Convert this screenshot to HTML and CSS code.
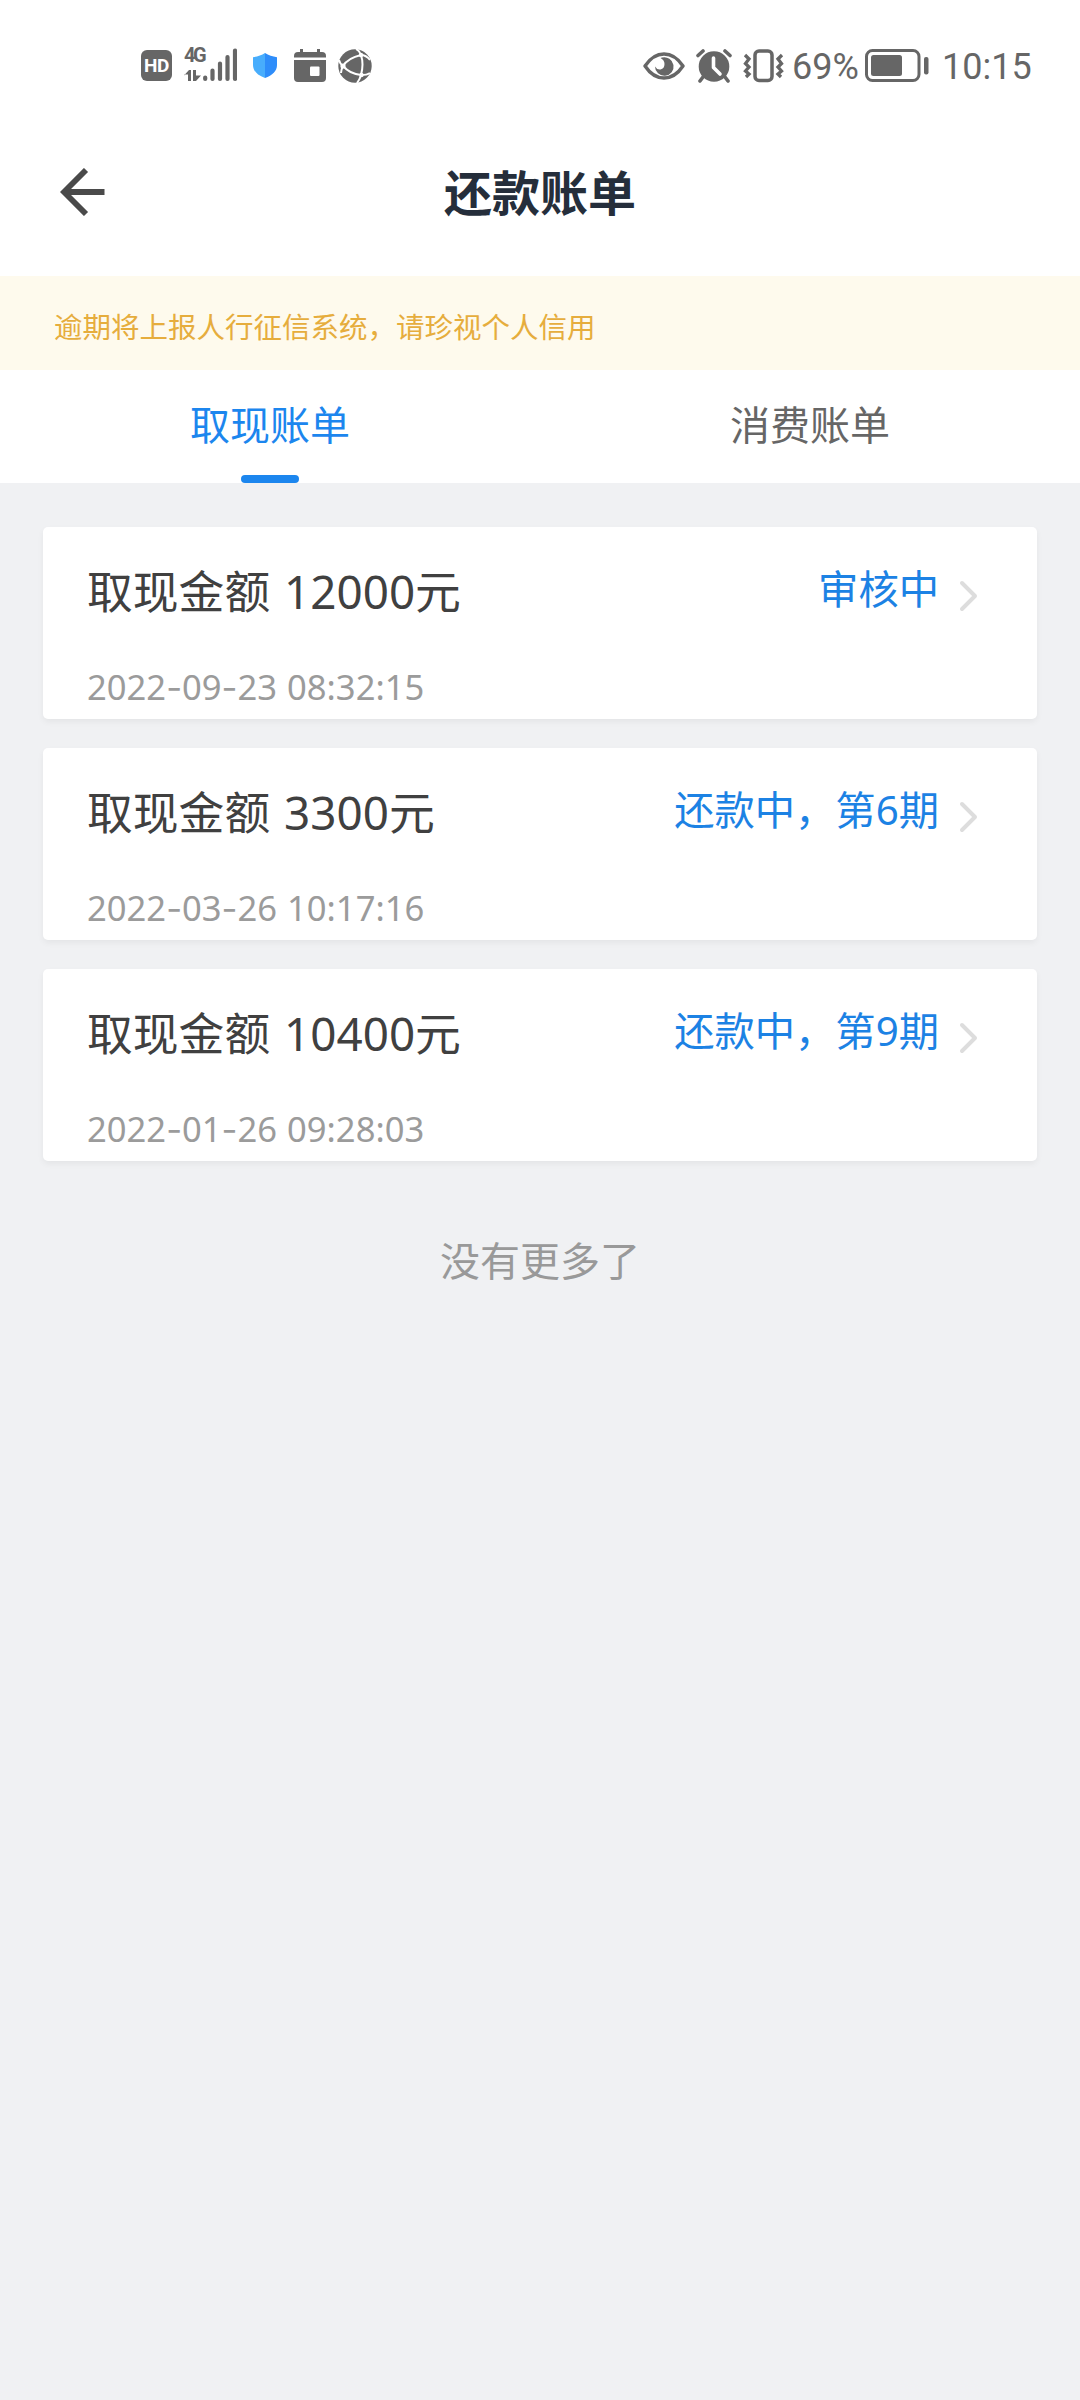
FILE: index.html
```html
<!DOCTYPE html>
<html lang="zh-CN">
<head>
<meta charset="utf-8">
<title>还款账单</title>
<link rel="stylesheet" href="styles.css">
</head>
<body>
<div class="statusbar">
  <div class="status-left">
    <span class="hd">HD</span>
    <div class="signal">
      <div class="net"><span class="gen">4G</span>
        <svg width="17" height="12" viewBox="0 0 17 12"><path d="M0 5.500 5 0h2v11H4V4.500H0zM9 0h3v5.500h5L12 11H9z" fill="#666"/></svg>
      </div>
      <svg class="bars" width="34" height="34" viewBox="0 0 34 34" stroke="#666" stroke-width="4.200" stroke-linecap="round"><path d="M2.200 29.500v1.500M9.500 22.500v8.500M17 15.500v15.500M24.500 9v22M32 2.500v28.500"/></svg>
    </div>
    <svg class="shield" width="26" height="27" viewBox="0 0 26 27"><path d="M13 1C9.500 3.500 5.500 4.500 1 5.200V13c0 6 4.500 10.500 12 13z" fill="#48adfc"/><path d="M13 1c3.500 2.500 7.500 3.500 12 4.200V13c0 6-4.500 10.500-12 13z" fill="#2e8dfa"/></svg>
    <svg class="calendar" width="32" height="34" viewBox="0 0 32 34"><path d="M0 8.500V7q0-4 4-4h2V0h3v3h14V0h3v3h2q4 0 4 4v1.500zM0 11h32v18q0 4-4 4H4q-4 0-4-4z" fill="#666"/><rect x="16" y="17.500" width="9.500" height="9.500" rx="1" fill="#fff"/></svg>
    <svg class="globe" width="34" height="34" viewBox="0 0 34 34"><circle cx="17" cy="17" r="16.700" fill="#666"/><g fill="none" stroke="#fff" stroke-width="2"><path d="M18 0q3 1 5 6 3 9 0 20-1 4-4 8M23 6Q10 9 5 17q-2 4-2 7M5 17q7 8 18 9 6 0 9-2M23 6q5 0 9 5M5 17Q2 15 1 11"/></g><g fill="#fff"><circle cx="23" cy="6" r="2.200"/><circle cx="5" cy="17" r="2.600"/><circle cx="23.500" cy="26" r="2.200"/></g></svg>
  </div>
  <div class="status-right">
    <svg class="eye" width="42" height="28" viewBox="0 0 42 28"><path d="M2 14Q10 2 21 2t19 12Q32 26 21 26T2 14z" fill="none" stroke="#666" stroke-width="3.400" stroke-linejoin="round"/><path d="M19 5.500A9.300 9.300 0 1 1 12 14.500Q14 18 17.500 17.500 21.500 16.500 21.500 12 21.500 8 17.500 6z" fill="#666"/></svg>
    <svg class="alarm" width="36" height="34" viewBox="0 0 36 34"><circle cx="18" cy="17.500" r="15.300" fill="#666"/><path d="M2 6.500 7 2M34 6.500 29 2M7 28l-3 4M29 28l3 4" stroke="#666" stroke-width="3.600" stroke-linecap="round"/><path d="M17.500 9v9.500L24 25" fill="none" stroke="#fff" stroke-width="3.600" stroke-linecap="round" stroke-linejoin="round"/></svg>
    <svg class="vibrate" width="42" height="34" viewBox="0 0 42 34" fill="none" stroke="#666"><rect x="12" y="2" width="17" height="29.500" rx="4" stroke-width="3.500"/><path d="M2 6l4 4-3.500 4.500L6 18l-3.500 4L6 25l-3 3M39 6l-4 4 3.500 4.500L35 18l3.500 4L35 25l3 3" stroke-width="3.300"/></svg>
    <span class="percent">69%</span>
    <svg class="battery" width="64" height="34" viewBox="0 0 64 34"><rect x="1.500" y="1.500" width="52.500" height="30" rx="6" fill="none" stroke="#666" stroke-width="3"/><rect x="6" y="6" width="31" height="21" rx="2.500" fill="#666"/><rect x="59" y="8" width="4.500" height="17.500" rx="2" fill="#666"/></svg>
    <span class="clock">10:15</span>
  </div>
</div>
<header class="titlebar">
  <svg class="back" width="45" height="48" viewBox="0 0 45 48"><path d="M26 2 4 24l22 22M4 24h40.500" fill="none" stroke="#4a4a4a" stroke-width="5.800"/></svg>
  <h1>还款账单</h1>
</header>
<div class="notice">逾期将上报人行征信系统，请珍视个人信用</div>
<nav class="tabs">
  <div class="tab active">取现账单</div>
  <div class="tab">消费账单</div>
</nav>
<main class="bills">
  <section class="card">
    <div class="row"><span class="amount">取现金额 12000元</span><span class="state">审核中</span><svg class="chevron" width="20" height="32" viewBox="0 0 20 32"><path d="M3 3l13 13L3 29"/></svg></div>
    <div class="date">2022<i>-</i>09<i>-</i>23 08:32:15</div>
  </section>
  <section class="card">
    <div class="row"><span class="amount">取现金额 3300元</span><span class="state">还款中，第6期</span><svg class="chevron" width="20" height="32" viewBox="0 0 20 32"><path d="M3 3l13 13L3 29"/></svg></div>
    <div class="date">2022<i>-</i>03<i>-</i>26 10:17:16</div>
  </section>
  <section class="card">
    <div class="row"><span class="amount">取现金额 10400元</span><span class="state">还款中，第9期</span><svg class="chevron" width="20" height="32" viewBox="0 0 20 32"><path d="M3 3l13 13L3 29"/></svg></div>
    <div class="date">2022<i>-</i>01<i>-</i>26 09:28:03</div>
  </section>
  <p class="end">没有更多了</p>
</main>
</body>
</html>
```
FILE: styles.css
```css
* { box-sizing: border-box; }
body {
  margin: 0;
  min-height: 2400px;
  background: #f0f1f3;
  font-family: "Noto Sans", "Noto Sans CJK SC", sans-serif;
}
svg { display: block; flex: none; }
.statusbar {
  display: flex;
  justify-content: space-between;
  height: 130px;
  padding: 48px 48px 0 141px;
  background: #fff;
  color: #666;
}
.status-left, .status-right { display: flex; align-items: flex-start; height: 36px; }
.hd {
  width: 31px;
  height: 31px;
  margin-top: 2px;
  border-radius: 6px;
  background: #666;
  color: #fff;
  font: 700 19px/32px Roboto, sans-serif;
  letter-spacing: -0.500px;
  text-align: center;
}
.signal { display: flex; margin-left: 12px; }
.net { display: flex; flex-direction: column; width: 19px; gap: 7px; }
.gen { font: 700 20px/15px Roboto, sans-serif; letter-spacing: -2.500px; }
.shield { margin: 4px 0 0 15px; }
.calendar { margin: 1px 0 0 16px; }
.globe { margin: 1px 0 0 12px; }
.eye { margin-top: 4px; }
.alarm { margin: 1px 0 0 11px; }
.vibrate { margin: 1px 0 0 11px; }
.percent, .clock { font: 400 36px/38px Roboto, sans-serif; }
.percent { width: 68px; margin-left: 7px; }
.battery { margin: 1px 0 0 5px; }
.clock { width: 90px; margin-left: 13px; }
.titlebar {
  display: grid;
  grid-template-columns: 60px 1fr 60px;
  height: 146px;
  padding: 38px 0 0;
  background: #fff;
}
.back { justify-self: end; margin-right: -45px; }
h1 {
  margin: 0;
  color: #252e3b;
  font-size: 48px;
  line-height: 50px;
  font-weight: 700;
  text-align: center;
}
.notice {
  height: 94px;
  padding: 31px 54px 0;
  background: #fefaed;
  color: #e6ad3d;
  font-size: 28.500px;
  line-height: 40px;
}
.tabs { display: flex; height: 113px; background: #fff; }
.tab {
  flex: 1;
  display: flex;
  flex-direction: column;
  align-items: center;
  justify-content: space-between;
  padding-top: 30px;
  color: #666;
  font-size: 40px;
  line-height: 50px;
}
.active { color: #1c86ee; }
.active::after { content: ""; width: 58px; height: 8px; border-radius: 4px; background: #1c86ee; }
.bills { display: flex; flex-direction: column; gap: 29px; padding: 44px 43px 0; }
.card {
  height: 192px;
  padding: 34px 56px 0 44px;
  border-radius: 5px;
  background: #fff;
  box-shadow: 0 3px 6px rgba(0, 0, 0, 0.050);
}
.row { display: flex; align-items: flex-start; }
.amount { flex: 1; color: #404040; font-size: 45.800px; line-height: 60px; word-spacing: 2px; }
.state { color: #1c82e4; font-size: 40.300px; line-height: 55px; }
.chevron { margin: 19px 2px 0 20px; }
.chevron path { fill: none; stroke: #ddd; stroke-width: 4; stroke-linecap: round; stroke-linejoin: round; }
.date { margin-top: 41px; color: #9b9b9b; font-size: 34.600px; line-height: 50px; word-spacing: 1px; }
.date i { font-family: Inter, sans-serif; font-style: normal; }
.end { margin: 45px 0 0; color: #999; font-size: 40px; line-height: 52px; text-align: center; }
```
